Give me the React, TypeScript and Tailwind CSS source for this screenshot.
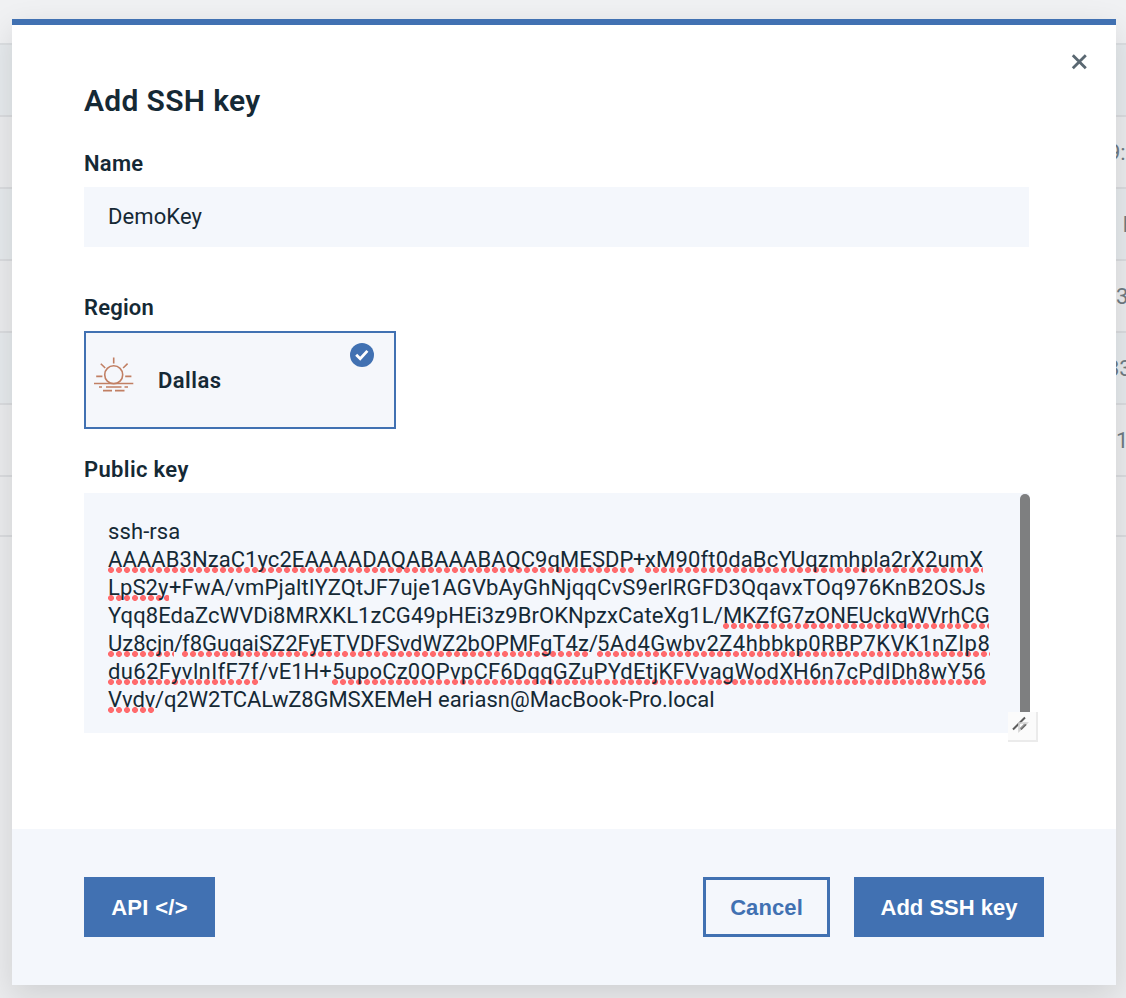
import type { ReactNode } from "react";

type Segment = { text: string; className: string; flagged?: boolean };

const keyLines: Segment[][] = [
  [{ text: "ssh-rsa", className: "w-[80px] tracking-[0.1px]" }],
  [
    { text: "AAAAB3NzaC1yc2EAAAADAQABAAABAQC9qMESDP", className: "w-[526px] tracking-[0.07px]", flagged: true },
    { text: "+", className: "-ml-px w-[12px]" },
    { text: "xM90ft0daBcYUqzmhpla2rX2umX", className: "w-[338px] tracking-[0.16px]", flagged: true },
  ],
  [
    { text: "LpS2y", className: "w-[61px] tracking-[0.1px]", flagged: true },
    { text: "+FwA/vmPjaltlYZQtJF7uje1AGVbAyGhNjqqCvS9erlRGFD3QqavxTOq976KnB2OSJs", className: "w-[818px] tracking-[0.14px]" },
  ],
  [
    { text: "Yqq8EdaZcWVDi8MRXKL1zCG49pHEi3z9BrOKNpzxCateXg1L/", className: "w-[615px] tracking-[0.06px]" },
    { text: "MKZfG7zONEUckqWVrhCG", className: "w-[266px]", flagged: true },
  ],
  [
    { text: "Uz8cjn", className: "w-[66px]", flagged: true },
    { text: "/", className: "w-[8px]" },
    { text: "f8GuqaiSZ2FyETVDFSvdWZ2bOPMFgT4z", className: "w-[407px]", flagged: true },
    { text: "/", className: "w-[8px]" },
    { text: "5Ad4Gwbv2Z4hbbkp0RBP7KVK1nZIp8", className: "w-[393px] tracking-[0.44px]", flagged: true },
  ],
  [
    { text: "du62FyvlnIfF7f", className: "w-[151px] tracking-[0.38px]", flagged: true },
    { text: "/vE1H+", className: "w-[73px]" },
    { text: "5upoCz0OPvpCF6DqqGZuPYdEtjKFVvagWodXH6n7cPdIDh8wY56", className: "w-[654px] tracking-[0.2px]", flagged: true },
  ],
  [
    { text: "Vvdv", className: "w-[47px]", flagged: true },
    { text: "/q2W2TCALwZ8GMSXEMeH", className: "w-[283px] tracking-[-0.14px]" },
    { text: "eariasn@MacBook-Pro.local", className: "w-[278px]" },
  ],
];

const rows = [
  { bg: "bg-[#e6eaed]", cell: "" },
  { bg: "bg-[#ebecee]", cell: "9:" },
  { bg: "bg-[#e6eaed]", cell: "M" },
  { bg: "bg-[#ebecee]", cell: "3" },
  { bg: "bg-[#e6eaed]", cell: "33" },
  { bg: "bg-[#ebecee]", cell: "1" },
];

const cellShift = ["", "-ml-[8px]", "ml-[7px] font-bold", "", "-ml-[9px]", ""];

function Label({ children, className = "" }: { children: ReactNode; className?: string }) {
  return <div className={`text-[22px] leading-[28px] font-semibold ${className}`}>{children}</div>;
}

function SunIcon() {
  return (
    <svg className="mt-[24px] ml-[8px] shrink-0" width="40" height="36" viewBox="0 0 40 36" fill="none" stroke="#c17f63" strokeWidth="1.6">
      <circle cx="19.7" cy="17.8" r="9" />
      <path d="M19.7 0.5v6M6.8 6.7l4.4 4.3M33.6 6.7l-4.5 4.3M2.2 19.4h6.2M31.2 19.4h6.2M0 26.5h39.3M5 30h3M12 30h15.5M30.5 30h3.5M9 33.6h9M21 33.6h9.5" />
    </svg>
  );
}

export default function App() {
  return (
    <div className="relative h-[998px] w-[1126px] overflow-hidden bg-[#ebecee] font-[Roboto,sans-serif] text-[#152935]">
      <div className="flex flex-col">
        <div className="h-[45px] border-b-2 border-[#dcdfe2] bg-[#f0f1f3]" />
        {rows.map((row, i) => (
          <div key={i} className={`flex h-[72px] items-center border-b-2 border-[#dadcdf] pl-[1116px] text-[22px] whitespace-nowrap text-[#6f7b83] ${row.bg}`}>
            <span className={cellShift[i]}>{row.cell}</span>
          </div>
        ))}
        <div className="h-[60px] border-b-2 border-[#dadcdf]" />
      </div>

      <div role="dialog" className="absolute top-[19px] left-[12px] flex h-[966px] w-[1104px] flex-col border-t-[6px] border-[#4171b2] bg-white shadow-[0_10px_30px_rgba(0,0,0,0.12)]">
        <div className="flex flex-1 flex-col pl-[72px]">
          <div className="flex h-[56px] justify-end pt-[29px] pr-[29px]">
            <svg width="16" height="16" viewBox="0 0 16 16" stroke="#5a6872" strokeWidth="2.8">
              <path d="M1.8 1.3l13 13M14.8 1.3l-13 13" />
            </svg>
          </div>
          <h1 className="text-[30px] leading-[40px] font-semibold tracking-[0.32px]">Add SSH key</h1>
          <Label className="mt-[29px] tracking-[0.25px]">Name</Label>
          <div className="mt-[9px] flex h-[60px] w-[945px] items-center bg-[#f4f7fc] pb-[2px] pl-[24px] text-[22px] tracking-[0.1px]">DemoKey</div>
          <Label className="mt-[47px] tracking-[0.2px]">Region</Label>
          <div className="mt-[9px] flex h-[98px] w-[312px] border-2 border-[#4171b2] bg-[#f5f7fb]">
            <SunIcon />
            <Label className="mt-[34px] ml-[24px] flex-1 tracking-[0.45px]">Dallas</Label>
            <svg className="mt-[10px] mr-[20px]" width="24" height="24" viewBox="0 0 24 24">
              <circle cx="12" cy="12" r="12" fill="#4171b2" />
              <path d="M6.2 11.8l4 4 7.2-7.9" fill="none" stroke="#fff" strokeWidth="2.8" />
            </svg>
          </div>
          <Label className="mt-[27px] tracking-[0.35px]">Public key</Label>
          <div className="relative mt-[9px] flex h-[240px] w-[945px] flex-col bg-[#f4f7fc] pt-[25px] pl-[24px] text-[22px]">
            {keyLines.map((line, i) => (
              <div key={i} className="flex h-[28px] leading-[28px] whitespace-nowrap">
                {line.map((seg, j) => (
                  <span
                    key={j}
                    className={`h-[28px] shrink-0 ${seg.flagged ? "bg-[radial-gradient(circle_at_3px_3px,#ff6b6d_2.6px,transparent_3.3px)] bg-[length:8px_7px] bg-[position:0_21px] bg-repeat-x" : ""} ${seg.className}`}
                  >
                    {seg.text}
                  </span>
                ))}
              </div>
            ))}
            <div className="absolute top-[1px] left-[936px] h-[218px] w-[10px] rounded-t-[5px] bg-[#7e7f80]" />
            <svg className="absolute top-[219px] left-[924px]" width="30" height="30" viewBox="0 0 30 30" fill="none">
              <path d="M0 0h30v30H0z" fill="#ebebeb" />
              <path d="M0 0h28v28H0z" fill="#fbfbfb" />
              <path d="M5 17.5L17 5.5M12 17.5l6-6" stroke="#5c5c5c" strokeWidth="2" />
              <path d="M11 11h8l-8 8z" stroke="#d3d3d3" strokeWidth="1.6" />
              <path d="M13 17.5l5-5" stroke="#6a6a6a" strokeWidth="1.6" />
            </svg>
          </div>
        </div>
        <div className="flex h-[156px] items-start bg-[#f4f7fc] pt-[48px] pr-[72px] pl-[72px] font-['Liberation_Sans',sans-serif] text-[22px] font-bold">
          <button className="h-[60px] w-[131px] bg-[#4171b2] tracking-[0.3px] text-white">API &lt;/&gt;</button>
          <button className="ml-auto h-[60px] w-[127px] border-3 border-[#4171b2] tracking-[0.1px] text-[#4171b2]">Cancel</button>
          <button className="ml-[24px] h-[60px] w-[190px] bg-[#4171b2] text-white">Add SSH key</button>
        </div>
      </div>
    </div>
  );
}
